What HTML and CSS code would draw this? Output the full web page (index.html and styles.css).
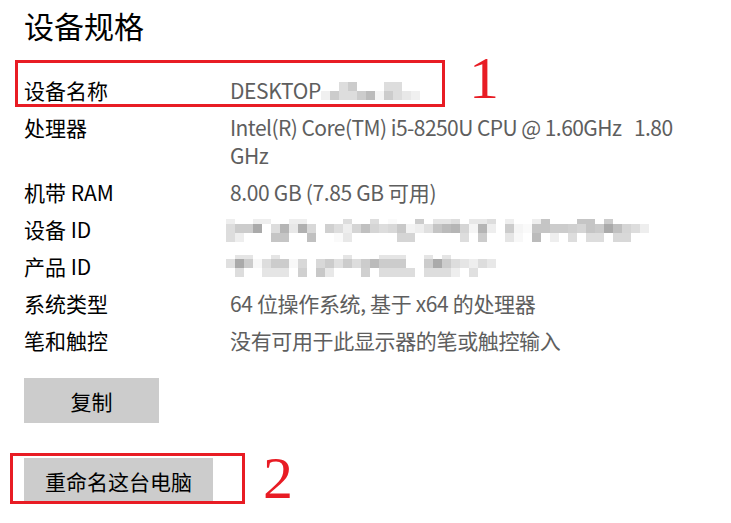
FILE: index.html
```html
<!DOCTYPE html>
<html lang="zh-CN">
<head>
<meta charset="utf-8">
<title>设备规格</title>
<link rel="stylesheet" href="styles.css">
</head>
<body>
<main class="page">
  <h1 class="title">设备规格</h1>
  <dl class="specs">
    <div class="row">
      <dt class="label">设备名称</dt>
      <dd class="value value-inline">
        <span>DESKTOP</span>
        <svg class="mosaic" width="100" height="28" viewBox="0 0 100 28" aria-hidden="true">
          <rect x="18" y="6" width="9" height="9" fill="#ddd"/><rect x="27" y="6" width="9" height="9" fill="#ccc"/>
          <rect x="63" y="6" width="9" height="9" fill="#ddd"/><rect x="72" y="6" width="9" height="9" fill="#ddd"/>
          <rect x="0" y="15" width="9" height="9" fill="#f0f0f0"/><rect x="9" y="15" width="9" height="9" fill="#ccc"/>
          <rect x="18" y="15" width="9" height="9" fill="#ddd"/><rect x="27" y="15" width="9" height="9" fill="#ddd"/>
          <rect x="36" y="15" width="9" height="9" fill="#ccc"/><rect x="45" y="15" width="9" height="9" fill="#bbb"/>
          <rect x="54" y="15" width="9" height="9" fill="#f5f5f5"/><rect x="63" y="15" width="9" height="9" fill="#ccc"/>
          <rect x="72" y="15" width="9" height="9" fill="#ddd"/><rect x="81" y="15" width="9" height="9" fill="#e8e8e8"/>
          <rect x="90" y="15" width="9" height="9" fill="#f0f0f0"/>
        </svg>
      </dd>
    </div>
    <div class="row">
      <dt class="label">处理器</dt>
      <dd class="value value-cpu">Intel(R) Core(TM) i5-8250U CPU @ 1.60GHz&nbsp;&nbsp; 1.80 GHz</dd>
    </div>
    <div class="row">
      <dt class="label">机带 RAM</dt>
      <dd class="value">8.00 GB (7.85 GB 可用)</dd>
    </div>
    <div class="row">
      <dt class="label">设备 ID</dt>
      <dd class="value">
        <svg class="mosaic mosaic-shift" width="432" height="28" viewBox="0 0 432 28" aria-hidden="true">
          <g>
            <rect x="0" y="4" width="9" height="5" fill="#eee"/><rect x="27" y="4" width="18" height="5" fill="#eee"/>
            <rect x="63" y="4" width="18" height="5" fill="#eee"/><rect x="117" y="4" width="9" height="5" fill="#ddd"/>
            <rect x="144" y="4" width="9" height="5" fill="#ddd"/><rect x="162" y="4" width="9" height="5" fill="#fafafa"/>
            <rect x="189" y="4" width="9" height="5" fill="#ccc"/><rect x="207" y="4" width="18" height="5" fill="#e5e5e5"/>
            <rect x="225" y="4" width="9" height="5" fill="#ddd"/><rect x="243" y="4" width="18" height="5" fill="#e8e8e8"/>
            <rect x="261" y="4" width="9" height="5" fill="#ddd"/><rect x="279" y="4" width="9" height="5" fill="#eee"/>
            <rect x="306" y="4" width="9" height="5" fill="#eee"/><rect x="315" y="4" width="9" height="5" fill="#c5c5c5"/>
            <rect x="351" y="4" width="18" height="5" fill="#c5c5c5"/><rect x="378" y="4" width="9" height="5" fill="#ccc"/>
          </g>
          <g>
            <rect x="0" y="9" width="9" height="9" fill="#ddd"/><rect x="9" y="9" width="18" height="9" fill="#ccc"/>
            <rect x="27" y="9" width="9" height="9" fill="#aaa"/><rect x="45" y="9" width="9" height="9" fill="#ddd"/>
            <rect x="54" y="9" width="9" height="9" fill="#b5b5b5"/><rect x="63" y="9" width="9" height="9" fill="#e8e8e8"/>
            <rect x="72" y="9" width="9" height="9" fill="#b0b0b0"/><rect x="81" y="9" width="9" height="9" fill="#d8d8d8"/>
            <rect x="99" y="9" width="9" height="9" fill="#d0d0d0"/><rect x="108" y="9" width="9" height="9" fill="#ddd"/>
            <rect x="117" y="9" width="9" height="9" fill="#eee"/><rect x="126" y="9" width="9" height="9" fill="#d5d5d5"/>
            <rect x="135" y="9" width="9" height="9" fill="#c0c0c0"/><rect x="144" y="9" width="9" height="9" fill="#d5d5d5"/>
            <rect x="153" y="9" width="9" height="9" fill="#ddd"/><rect x="162" y="9" width="9" height="9" fill="#d8d8d8"/>
            <rect x="171" y="9" width="9" height="9" fill="#c8c8c8"/><rect x="180" y="9" width="9" height="9" fill="#f3f3f3"/>
            <rect x="189" y="9" width="9" height="9" fill="#eee"/><rect x="198" y="9" width="9" height="9" fill="#e0e0e0"/>
            <rect x="207" y="9" width="9" height="9" fill="#c5c5c5"/><rect x="216" y="9" width="9" height="9" fill="#bbb"/>
            <rect x="225" y="9" width="9" height="9" fill="#b5b5b5"/><rect x="234" y="9" width="9" height="9" fill="#d5d5d5"/>
            <rect x="243" y="9" width="9" height="9" fill="#f5f5f5"/><rect x="252" y="9" width="9" height="9" fill="#b5b5b5"/>
            <rect x="261" y="9" width="9" height="9" fill="#eee"/><rect x="279" y="9" width="9" height="9" fill="#ccc"/>
            <rect x="288" y="9" width="9" height="9" fill="#f5f5f5"/><rect x="297" y="9" width="9" height="9" fill="#fafafa"/>
            <rect x="306" y="9" width="18" height="9" fill="#c5c5c5"/><rect x="324" y="9" width="18" height="9" fill="#ccc"/>
            <rect x="342" y="9" width="9" height="9" fill="#d0d0d0"/><rect x="351" y="9" width="9" height="9" fill="#d5d5d5"/>
            <rect x="360" y="9" width="9" height="9" fill="#c5c5c5"/><rect x="369" y="9" width="9" height="9" fill="#cacaca"/>
            <rect x="378" y="9" width="9" height="9" fill="#aaa"/><rect x="387" y="9" width="9" height="9" fill="#c0c0c0"/>
            <rect x="396" y="9" width="9" height="9" fill="#d5d5d5"/><rect x="405" y="9" width="9" height="9" fill="#ddd"/>
            <rect x="414" y="9" width="9" height="9" fill="#eee"/>
          </g>
          <g>
            <rect x="0" y="18" width="9" height="9" fill="#ddd"/><rect x="9" y="18" width="9" height="9" fill="#eee"/>
            <rect x="45" y="18" width="18" height="9" fill="#c5c5c5"/><rect x="81" y="18" width="9" height="9" fill="#c0c0c0"/>
            <rect x="108" y="18" width="9" height="9" fill="#fafafa"/><rect x="117" y="18" width="9" height="9" fill="#e8e8e8"/>
            <rect x="171" y="18" width="18" height="9" fill="#d5d5d5"/><rect x="234" y="18" width="9" height="9" fill="#ddd"/>
            <rect x="252" y="18" width="9" height="9" fill="#ccc"/><rect x="279" y="18" width="9" height="9" fill="#e5e5e5"/>
            <rect x="288" y="18" width="9" height="9" fill="#f8f8f8"/><rect x="306" y="18" width="9" height="9" fill="#bbb"/>
            <rect x="324" y="18" width="9" height="9" fill="#eee"/><rect x="342" y="18" width="9" height="9" fill="#ddd"/>
            <rect x="360" y="18" width="18" height="9" fill="#ddd"/><rect x="387" y="18" width="18" height="9" fill="#d8d8d8"/>
          </g>
        </svg>
      </dd>
    </div>
    <div class="row">
      <dt class="label">产品 ID</dt>
      <dd class="value">
        <svg class="mosaic mosaic-shift" width="272" height="28" viewBox="0 0 272 28" aria-hidden="true">
          <g fill="#e5e5e5">
            <rect x="9" y="3" width="18" height="4"/><rect x="45" y="3" width="9" height="4"/>
            <rect x="117" y="3" width="9" height="4"/><rect x="153" y="3" width="27" height="4"/>
            <rect x="198" y="3" width="9" height="4"/><rect x="216" y="3" width="9" height="4"/>
          </g>
          <g>
            <rect x="0" y="7" width="9" height="9" fill="#e0e0e0"/><rect x="9" y="7" width="9" height="9" fill="#aaa"/>
            <rect x="18" y="7" width="9" height="9" fill="#ccc"/><rect x="27" y="7" width="9" height="9" fill="#f8f8f8"/>
            <rect x="36" y="7" width="9" height="9" fill="#ddd"/><rect x="45" y="7" width="18" height="9" fill="#ccc"/>
            <rect x="63" y="7" width="9" height="9" fill="#f8f8f8"/><rect x="72" y="7" width="9" height="9" fill="#d8d8d8"/>
            <rect x="90" y="7" width="9" height="9" fill="#d8d8d8"/><rect x="99" y="7" width="9" height="9" fill="#ccc"/>
            <rect x="108" y="7" width="9" height="9" fill="#e0e0e0"/><rect x="117" y="7" width="9" height="9" fill="#ccc"/>
            <rect x="126" y="7" width="9" height="9" fill="#ddd"/><rect x="135" y="7" width="9" height="9" fill="#ccc"/>
            <rect x="144" y="7" width="9" height="9" fill="#bbb"/><rect x="153" y="7" width="27" height="9" fill="#ccc"/>
            <rect x="198" y="7" width="9" height="9" fill="#ccc"/><rect x="207" y="7" width="9" height="9" fill="#aaa"/>
            <rect x="216" y="7" width="9" height="9" fill="#ccc"/><rect x="225" y="7" width="9" height="9" fill="#ddd"/>
            <rect x="234" y="7" width="9" height="9" fill="#e5e5e5"/><rect x="243" y="7" width="9" height="9" fill="#eee"/>
            <rect x="252" y="7" width="9" height="9" fill="#ddd"/><rect x="261" y="7" width="9" height="9" fill="#e8e8e8"/>
          </g>
          <g>
            <rect x="9" y="16" width="9" height="9" fill="#ddd"/><rect x="36" y="16" width="27" height="9" fill="#e5e5e5"/>
            <rect x="72" y="16" width="9" height="9" fill="#d0d0d0"/><rect x="90" y="16" width="9" height="9" fill="#c8c8c8"/>
            <rect x="99" y="16" width="9" height="9" fill="#e8e8e8"/><rect x="135" y="16" width="9" height="9" fill="#d0d0d0"/>
            <rect x="153" y="16" width="36" height="9" fill="#ddd"/><rect x="198" y="16" width="27" height="9" fill="#ddd"/>
            <rect x="225" y="16" width="9" height="9" fill="#eee"/><rect x="243" y="16" width="9" height="9" fill="#e0e0e0"/>
          </g>
        </svg>
      </dd>
    </div>
    <div class="row">
      <dt class="label">系统类型</dt>
      <dd class="value">64 位操作系统, 基于 x64 的处理器</dd>
    </div>
    <div class="row">
      <dt class="label">笔和触控</dt>
      <dd class="value">没有可用于此显示器的笔或触控输入</dd>
    </div>
  </dl>
  <div class="actions">
    <button class="btn" type="button">复制</button>
    <button class="btn" type="button">重命名这台电脑</button>
  </div>

  <div class="mark mark-name" aria-hidden="true"></div>
  <span class="num num-one">1</span>
  <div class="mark mark-rename" aria-hidden="true"></div>
  <span class="num num-two">2</span>
</main>
</body>
</html>
```

FILE: styles.css
```css
html, body {
  margin: 0;
  padding: 0;
  background: #ffffff;
}

body {
  font-family: "Noto Sans CJK SC", "Noto Sans", sans-serif;
  color: #000000;
}

.page {
  position: relative;
  width: 731px;
  height: 523px;
  box-sizing: border-box;
  padding: 5px 0 0 24px;
  overflow: hidden;
}

.title {
  margin: 0;
  font-size: 30px;
  font-weight: 400;
  line-height: 40px;
}

.specs {
  margin: 31px 0 0 0;
  display: flex;
  flex-direction: column;
  gap: 9px;
}

.row {
  display: grid;
  grid-template-columns: 206px 470px;
}

.label {
  margin: 0;
  font-size: 21px;
  line-height: 28px;
  color: #000;
}

.value {
  margin: 0;
  font-size: 21px;
  line-height: 28px;
  letter-spacing: -0.35px;
  color: #5e5e5e;
}

.value-cpu {
  letter-spacing: -0.55px;
}

.value-inline {
  display: flex;
  align-items: flex-start;
}

.mosaic {
  display: block;
  flex: none;
}

.mosaic-shift {
  margin-left: -4px;
}

.actions {
  margin-top: 24px;
  display: flex;
  flex-direction: column;
  align-items: flex-start;
  gap: 35px;
}

.btn {
  min-width: 135px;
  height: 45px;
  padding: 0 21px;
  border: none;
  border-radius: 0;
  background: #cccccc;
  color: #000;
  font-family: "Noto Sans CJK SC", sans-serif;
  font-size: 21px;
}

.mark {
  position: absolute;
  box-sizing: border-box;
  border: 3px solid #e81c24;
}

.mark-name {
  left: 15px;
  top: 60px;
  width: 430px;
  height: 47px;
}

.mark-rename {
  left: 10px;
  top: 453px;
  width: 235px;
  height: 51px;
}

.num {
  position: absolute;
  font-family: "Liberation Serif", serif;
  font-size: 60px;
  line-height: 60px;
  color: #e81c24;
}

.num-one {
  left: 469px;
  top: 48px;
}

.num-two {
  left: 263px;
  top: 448px;
}
```
